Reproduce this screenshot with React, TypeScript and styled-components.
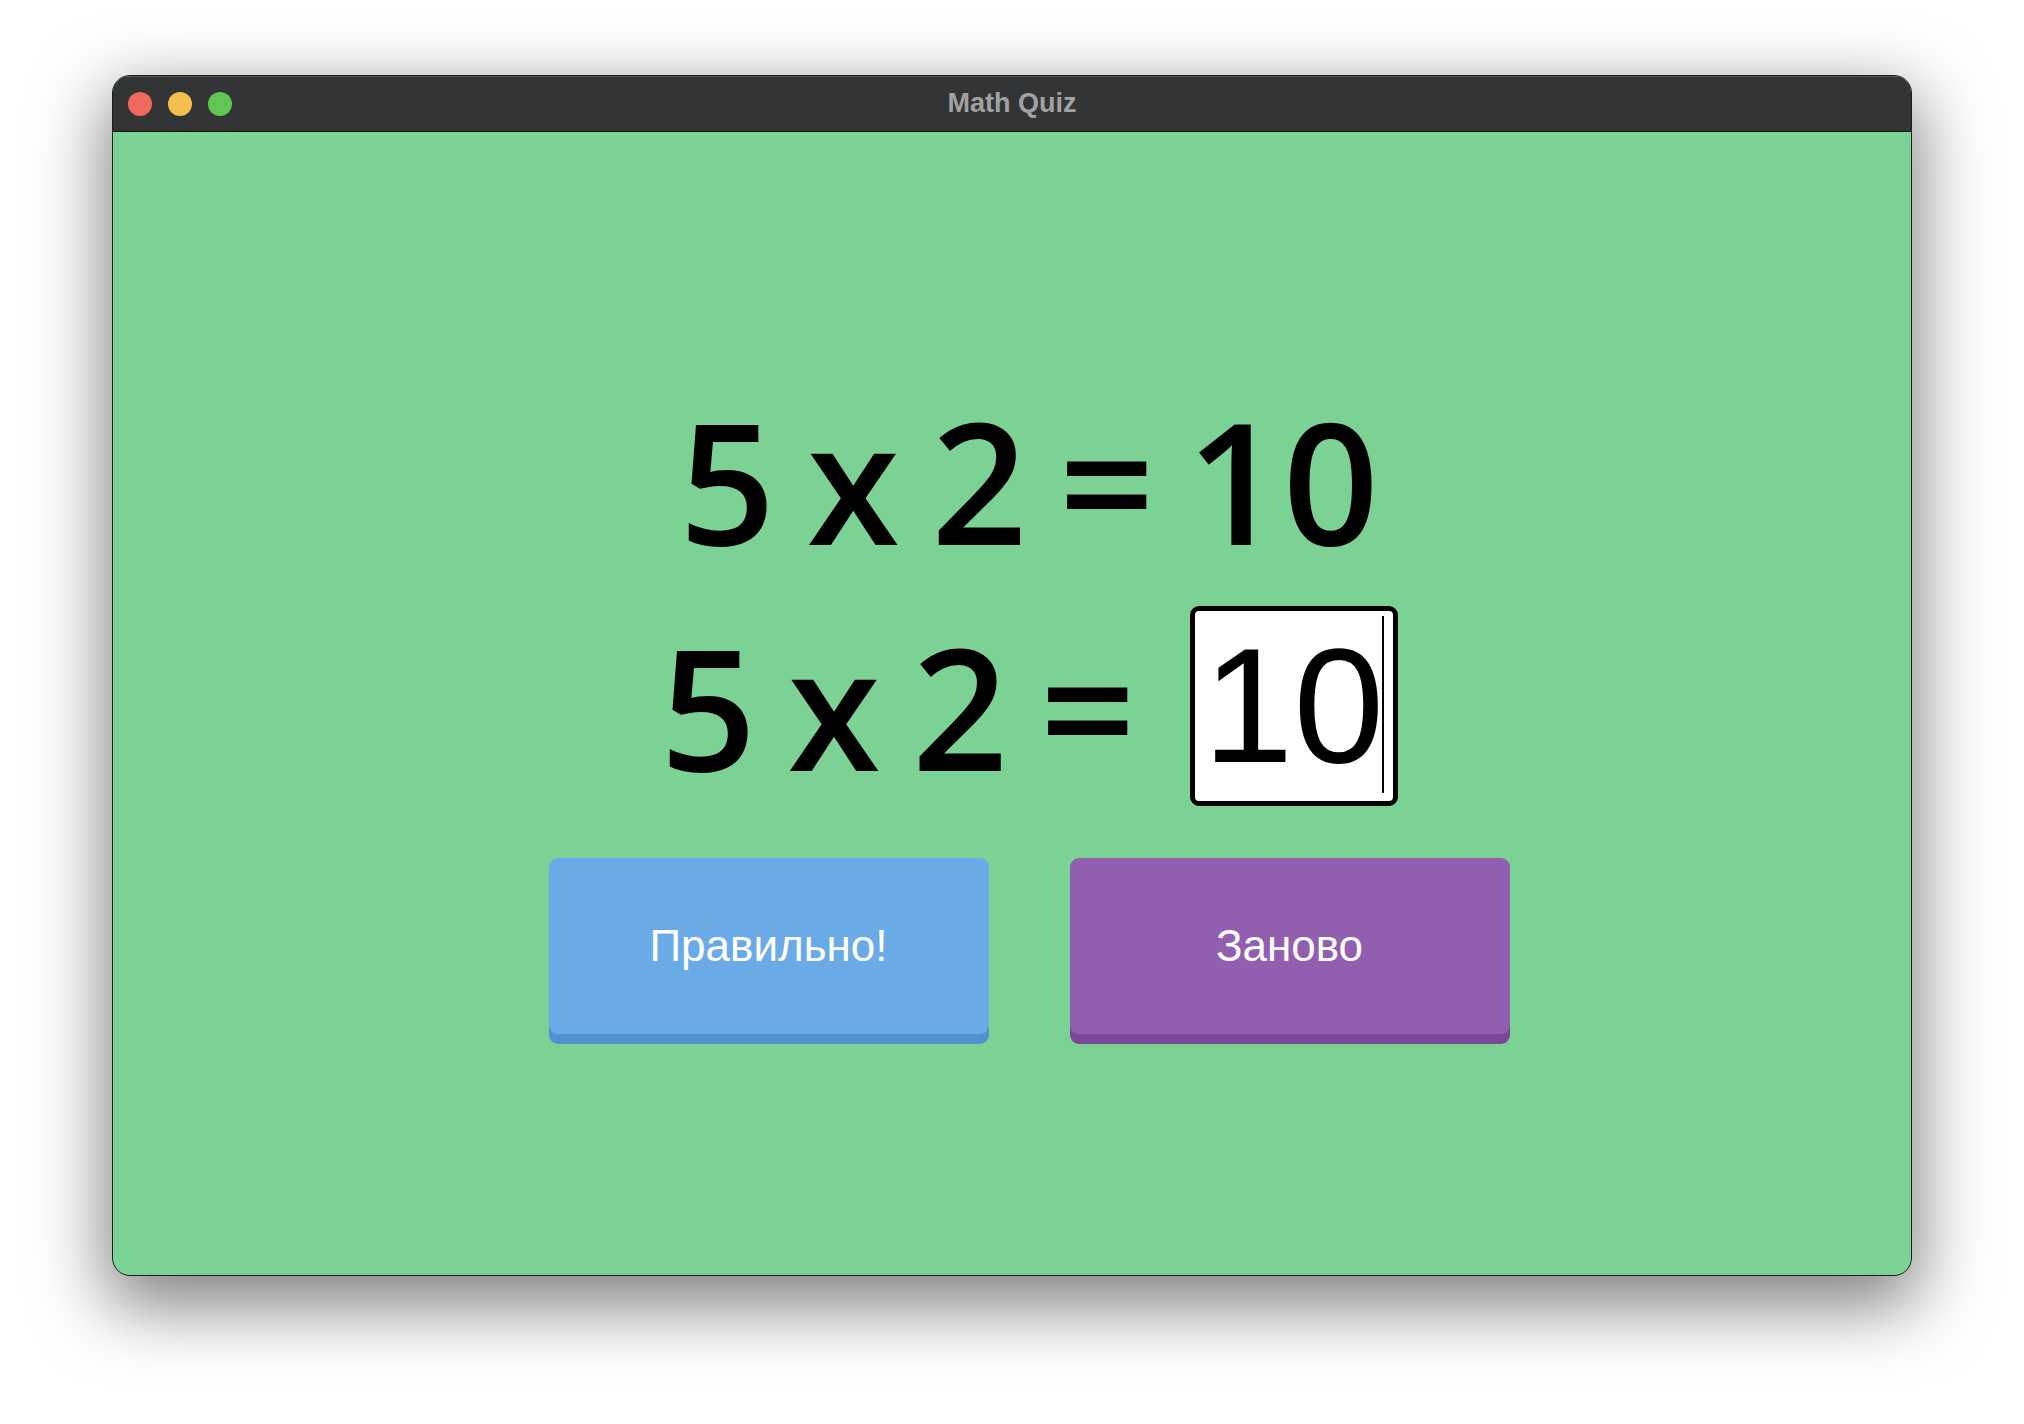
import React from "react";
import styled, { createGlobalStyle } from "styled-components";

const GlobalStyle = createGlobalStyle`
  html, body {
    margin: 0;
    padding: 0;
    background: #ffffff;
  }
  body {
    width: 2024px;
    height: 1424px;
    overflow: hidden;
  }
`;

const Page = styled.div`
  display: flex;
  justify-content: center;
  padding-top: 75px;
`;

const Window = styled.div`
  width: 1800px;
  height: 1201px;
  box-sizing: border-box;
  display: flex;
  flex-direction: column;
  border: 1px solid #1c1c1e;
  border-radius: 18px;
  overflow: hidden;
  background: #7bd294;
  box-shadow: 0 24px 70px 6px rgba(0, 0, 0, 0.5);
`;

const TitleBar = styled.div`
  height: 55px;
  display: grid;
  grid-template-columns: 1fr auto 1fr;
  align-items: center;
  background: #333436;
  border-bottom: 1px solid #0c0c0c;
  box-shadow: inset 0 1px 0 rgba(255, 255, 255, 0.18);
`;

const Lights = styled.div`
  display: flex;
  gap: 16px;
  padding-left: 15px;
`;

const Light = styled.span<{ $color: string }>`
  width: 24px;
  height: 24px;
  border-radius: 50%;
  background: ${(p) => p.$color};
`;

const Title = styled.div`
  font-family: "Liberation Sans", Arial, sans-serif;
  font-weight: 700;
  font-size: 27px;
  color: #a2a2a3;
`;

const Content = styled.div`
  flex: 1;
  display: flex;
  flex-direction: column;
  align-items: center;
  padding-top: 264px;
  padding-left: 34px;
`;

const Equation = styled.div`
  font-family: "Open Sans", "Noto Sans", sans-serif;
  font-weight: 600;
  font-size: 168px;
  line-height: 1;
  word-spacing: -12px;
  color: #000;
  white-space: pre;
`;

const AnswerRow = styled.div`
  display: flex;
  align-items: center;
  gap: 54px;
  margin-top: 42px;
`;

const InputWrap = styled.div`
  position: relative;
`;

const Answer = styled.input`
  width: 208px;
  height: 200px;
  box-sizing: border-box;
  padding: 0 8px;
  border: 5px solid #000;
  border-radius: 9px;
  background: #fff;
  font-family: "Liberation Sans", Arial, sans-serif;
  font-size: 163px;
  color: #000;
  outline: none;
  caret-color: transparent;
`;

const Caret = styled.span`
  position: absolute;
  top: 10px;
  right: 14px;
  width: 2px;
  height: 177px;
  background: #000;
`;

const Buttons = styled.div`
  display: flex;
  gap: 81px;
  margin-top: 52px;
`;

const Button = styled.button<{ $bg: string; $edge: string }>`
  width: 440px;
  height: 176px;
  border: none;
  border-radius: 9px;
  background: ${(p) => p.$bg};
  box-shadow: 0 10px 0 ${(p) => p.$edge};
  color: #fff;
  font-family: "Liberation Sans", Arial, sans-serif;
  font-size: 44px;
  cursor: pointer;
`;

export default function App() {
  return (
    <>
      <GlobalStyle />
      <Page>
        <Window>
          <TitleBar>
            <Lights>
              <Light $color="#ee6a5f" />
              <Light $color="#f5be4f" />
              <Light $color="#62c655" />
            </Lights>
            <Title>Math Quiz</Title>
            <span />
          </TitleBar>
          <Content>
            <Equation>5 x 2 = 10</Equation>
            <AnswerRow>
              <Equation>5 x 2 =</Equation>
              <InputWrap>
                <Answer defaultValue="10" />
                <Caret />
              </InputWrap>
            </AnswerRow>
            <Buttons>
              <Button $bg="#69aae7" $edge="#5092d0">
                Правильно!
              </Button>
              <Button $bg="#925eb0" $edge="#7c4896">
                Заново
              </Button>
            </Buttons>
          </Content>
        </Window>
      </Page>
    </>
  );
}
